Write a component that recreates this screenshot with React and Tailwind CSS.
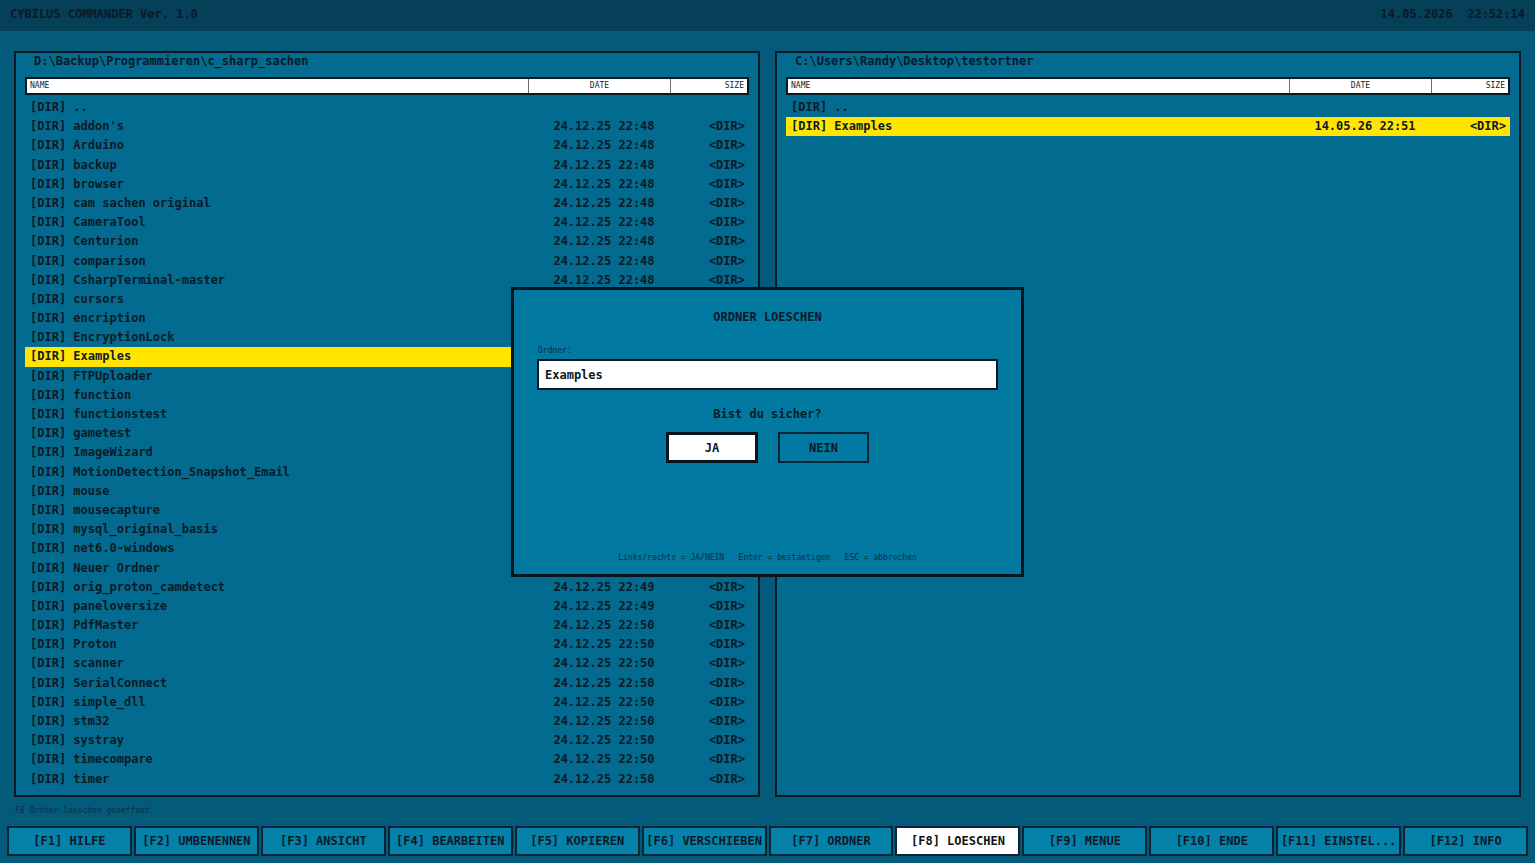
import { useState } from 'react'

const leftFiles = [
  ['..', '', ''],
  ["addon's", '24.12.25 22:48', '<DIR>'],
  ['Arduino', '24.12.25 22:48', '<DIR>'],
  ['backup', '24.12.25 22:48', '<DIR>'],
  ['browser', '24.12.25 22:48', '<DIR>'],
  ['cam sachen original', '24.12.25 22:48', '<DIR>'],
  ['CameraTool', '24.12.25 22:48', '<DIR>'],
  ['Centurion', '24.12.25 22:48', '<DIR>'],
  ['comparison', '24.12.25 22:48', '<DIR>'],
  ['CsharpTerminal-master', '24.12.25 22:48', '<DIR>'],
  ['cursors', '24.12.25 22:48', '<DIR>'],
  ['encription', '24.12.25 22:48', '<DIR>'],
  ['EncryptionLock', '24.12.25 22:48', '<DIR>'],
  ['Examples', '24.12.25 22:48', '<DIR>'],
  ['FTPUploader', '24.12.25 22:48', '<DIR>'],
  ['function', '24.12.25 22:48', '<DIR>'],
  ['functionstest', '24.12.25 22:49', '<DIR>'],
  ['gametest', '24.12.25 22:49', '<DIR>'],
  ['ImageWizard', '24.12.25 22:49', '<DIR>'],
  ['MotionDetection_Snapshot_Email', '24.12.25 22:49', '<DIR>'],
  ['mouse', '24.12.25 22:49', '<DIR>'],
  ['mousecapture', '24.12.25 22:49', '<DIR>'],
  ['mysql_original_basis', '24.12.25 22:49', '<DIR>'],
  ['net6.0-windows', '24.12.25 22:49', '<DIR>'],
  ['Neuer Ordner', '24.12.25 22:49', '<DIR>'],
  ['orig_proton_camdetect', '24.12.25 22:49', '<DIR>'],
  ['paneloversize', '24.12.25 22:49', '<DIR>'],
  ['PdfMaster', '24.12.25 22:50', '<DIR>'],
  ['Proton', '24.12.25 22:50', '<DIR>'],
  ['scanner', '24.12.25 22:50', '<DIR>'],
  ['SerialConnect', '24.12.25 22:50', '<DIR>'],
  ['simple_dll', '24.12.25 22:50', '<DIR>'],
  ['stm32', '24.12.25 22:50', '<DIR>'],
  ['systray', '24.12.25 22:50', '<DIR>'],
  ['timecompare', '24.12.25 22:50', '<DIR>'],
  ['timer', '24.12.25 22:50', '<DIR>'],
]

const rightFiles = [
  ['..', '', ''],
  ['Examples', '14.05.26 22:51', '<DIR>'],
]

const fkeys = [
  '[F1] HILFE',
  '[F2] UMBENENNEN',
  '[F3] ANSICHT',
  '[F4] BEARBEITEN',
  '[F5] KOPIEREN',
  '[F6] VERSCHIEBEN',
  '[F7] ORDNER',
  '[F8] LOESCHEN',
  '[F9] MENUE',
  '[F10] ENDE',
  '[F11] EINSTEL...',
  '[F12] INFO',
]

function Panel({ path, files, selected }) {
  return (
    <div className="flex-1 flex flex-col border-2 border-[#0a1822] bg-[#036b8f] px-[9px] pt-[1px]">
      {/* Pfad */}
      <div className="h-[14px] leading-[14px] pl-[9px] text-[12px] font-bold whitespace-pre">
        {path}
      </div>

      {/* Spaltenkopf */}
      <div className="mt-[9px] h-[18px] grid grid-cols-[1fr_142px_77px] bg-white border-2 border-[#0a1822] text-[8px] leading-[14px] font-normal text-[#1a1a1a]">
        <div className="pl-[3px]">NAME</div>
        <div className="text-center border-l border-[#6b6b6b]">DATE</div>
        <div className="text-right pr-[3px] border-l border-[#6b6b6b]">SIZE</div>
      </div>

      {/* Einträge */}
      <div className="mt-[3px] flex flex-col">
        {files.map(([name, date, size], i) => (
          <div
            key={name}
            className={`h-[19.2px] leading-[19.2px] grid grid-cols-[1fr_142px_77px] text-[12px] font-bold whitespace-pre ${
              i === selected ? 'bg-[#ffe500]' : ''
            }`}
          >
            <div className="pl-[5px]">[DIR] {name}</div>
            <div className="text-center pl-[6px]">{date}</div>
            <div className="text-right pr-[4px]">{size}</div>
          </div>
        ))}
      </div>
    </div>
  )
}

function DeleteDialog() {
  const [choice] = useState('ja')

  return (
    <div className="absolute left-[511px] top-[287px] w-[513px] h-[290px] border-[3px] border-[#08131b] bg-[#0179a0] flex flex-col items-center">
      <div className="mt-[19px] text-[12px] font-bold leading-[16px]">ORDNER LOESCHEN</div>

      <div className="self-stretch px-[23px] mt-[21px]">
        <div className="text-[8px] leading-[10px] text-[#0a2d45] pl-[1px]">Ordner:</div>
        <div className="mt-[3px] h-[31px] bg-white border-2 border-[#0a1822] flex items-center pl-[6px] text-[12px] font-bold">
          Examples
        </div>
      </div>

      <div className="mt-[16px] text-[12px] font-bold leading-[16px]">Bist du sicher?</div>

      <div className="mt-[10px] flex gap-[20px]">
        <div
          className={`w-[92px] h-[31px] flex items-center justify-center text-[12px] font-bold ${
            choice === 'ja' ? 'bg-white border-[3px] border-[#08131b]' : 'border-2 border-[#0a1822]'
          }`}
        >
          JA
        </div>
        <div className="w-[91px] h-[31px] flex items-center justify-center text-[12px] font-bold border-2 border-[#0a2434]">
          NEIN
        </div>
      </div>

      <div className="mt-auto mb-[10px] text-[8px] leading-[12px] text-[#0a2f48] whitespace-pre">
        Links/rechts = JA/NEIN   Enter = bestaetigen   ESC = abbrechen
      </div>
    </div>
  )
}

export default function App() {
  return (
    <div className="relative w-[1535px] h-[863px] overflow-hidden bg-[#045a7a] text-[#0b1a26] font-['DejaVu_Sans_Mono','Liberation_Mono',monospace] flex flex-col">
      {/* Titelleiste */}
      <div className="h-[31px] shrink-0 bg-[#053f58] flex items-center justify-between px-[10px] pb-[4px] text-[12px] font-bold whitespace-pre">
        <span>CYBILUS COMMANDER Ver. 1.0</span>
        <span>14.05.2026  22:52:14</span>
      </div>

      {/* Panels */}
      <div className="mt-[20px] h-[746px] shrink-0 flex gap-[15px] px-[14px]">
        <Panel path="D:\Backup\Programmieren\c_sharp_sachen" files={leftFiles} selected={13} />
        <Panel path="C:\Users\Randy\Desktop\testortner" files={rightFiles} selected={1} />
      </div>

      {/* Statuszeile */}
      <div className="h-[29px] shrink-0 pl-[15px] pt-[9px] text-[8px] leading-[10px] text-[#0a3048]">
        F8 Ordner loeschen geoeffnet.
      </div>

      {/* Funktionstasten */}
      <div className="h-[30px] shrink-0 flex gap-[2px] pl-[7px] pr-[7px]">
        {fkeys.map((label) => (
          <div
            key={label}
            className={`flex-1 flex items-center justify-center border-2 border-[#0a2434] text-[12px] font-bold whitespace-pre ${
              label.startsWith('[F8]') ? 'bg-white text-[#111]' : 'bg-[#0482aa]'
            }`}
          >
            {label}
          </div>
        ))}
      </div>

      <DeleteDialog />
    </div>
  )
}
